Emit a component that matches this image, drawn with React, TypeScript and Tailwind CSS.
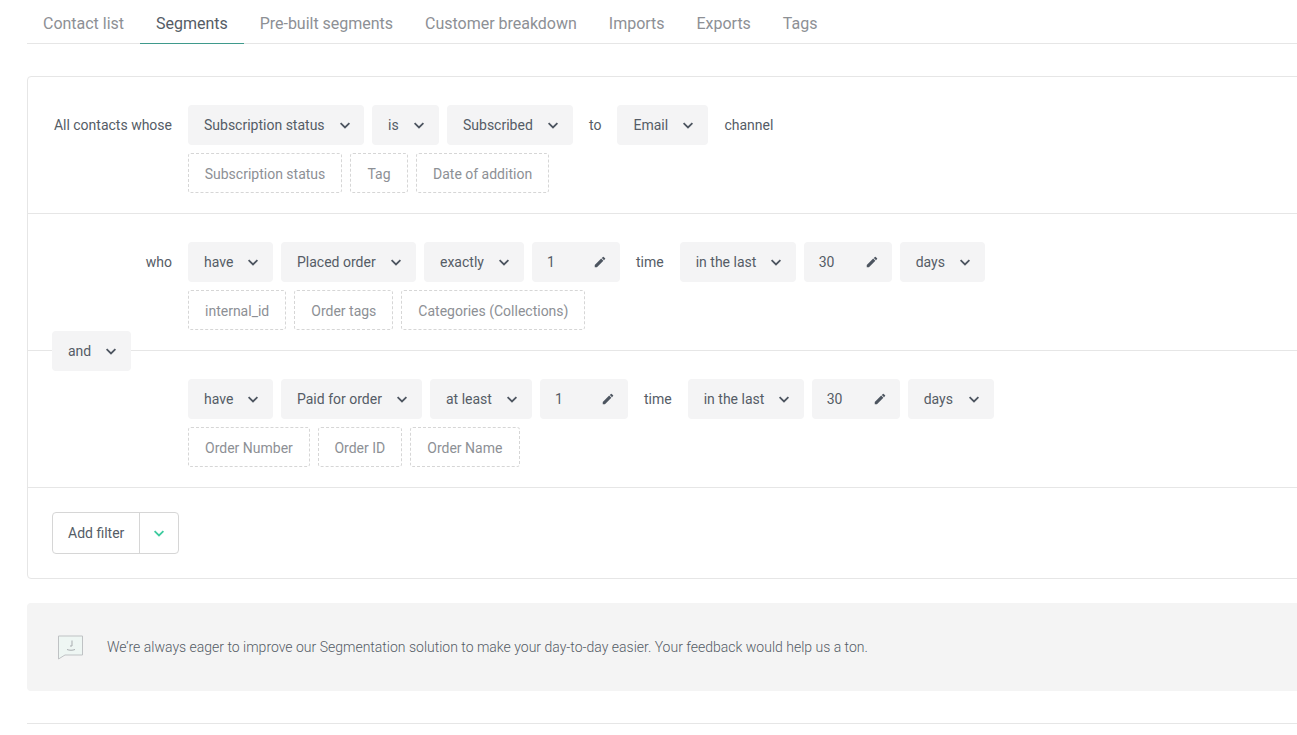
import { ReactNode } from "react";

function Chevron({ className = "text-[#4d5560]" }: { className?: string }) {
  return (
    <svg viewBox="0 0 16 16" className={`w-4 h-4 shrink-0 ${className}`} fill="none" stroke="currentColor" strokeWidth="1.8">
      <path d="M3.6 6.200 8 10.400l4.400-4.200" />
    </svg>
  );
}

function Pencil() {
  return (
    <svg viewBox="0 0 24 24" className="w-[14px] h-[14px] shrink-0 text-[#4d5560]" fill="currentColor">
      <path d="M3 17.25V21h3.75L17.81 9.94l-3.75-3.75L3 17.25zM20.71 7.04a1 1 0 0 0 0-1.41l-2.34-2.34a1 1 0 0 0-1.41 0l-1.83 1.83 3.75 3.75 1.83-1.83z" />
    </svg>
  );
}

function Select({ label, width = "" }: { label: string; width?: string }) {
  return (
    <div className={`h-10 flex items-center justify-between gap-3 pl-4 pr-3 bg-[#f4f4f5] rounded-[4px] text-[#555c66] whitespace-nowrap ${width}`}>
      {label}
      <Chevron />
    </div>
  );
}

function NumberInput({ value }: { value: string }) {
  return (
    <div className="h-10 w-[88px] flex items-center justify-between pl-[15px] pr-[13px] bg-[#f4f4f5] rounded-[4px] text-[#555c66]">
      {value}
      <Pencil />
    </div>
  );
}

function Word({ children }: { children: ReactNode }) {
  return <span className="px-2 text-[#555c66] whitespace-nowrap">{children}</span>;
}

function Ghost({ label, width = "" }: { label: string; width?: string }) {
  return (
    <div className={`h-10 flex items-center justify-center px-4 pt-[2px] border border-dashed border-[#d6d6d6] rounded-[3px] text-[#8d9095] whitespace-nowrap ${width}`}>
      {label}
    </div>
  );
}

function Section({ lead, main, ghosts }: { lead?: string; main: ReactNode; ghosts: ReactNode }) {
  return (
    <div className="flex pt-7 pb-5 border-b border-[#e6e6e6]">
      <div className="w-[144px] shrink-0 h-10 flex items-center justify-end text-[#555c66]">{lead}</div>
      <div className="ml-4">
        <div className="flex items-center gap-2">{main}</div>
        <div className="flex gap-2 mt-2">{ghosts}</div>
      </div>
    </div>
  );
}

export default function App() {
  const tabs = ["Contact list", "Segments", "Pre-built segments", "Customer breakdown", "Imports", "Exports", "Tags"];

  return (
    <div className="h-[735px] overflow-hidden pl-[27px] bg-white font-['Roboto',sans-serif] text-sm">
      <div className="flex h-11 border-b border-[#e6e6e6] text-base tracking-[-0.015px]">
        {tabs.map((t) => (
          <div
            key={t}
            className={`h-11 px-4 pt-[12px] leading-6 whitespace-nowrap ${
              t === "Segments" ? "text-[#555c66] border-b border-[#3f9a8c]" : "text-[#8d9095]"
            }`}
          >
            {t}
          </div>
        ))}
      </div>

      <div className="relative mt-8 mr-[-20px] border border-[#e6e6e6] rounded-[4px]">
        <Section
          lead="All contacts whose"
          main={
            <>
              <Select label="Subscription status" width="w-[176px]" />
              <Select label="is" width="w-[67px]" />
              <Select label="Subscribed" width="w-[126px]" />
              <Word>to</Word>
              <Select label="Email" width="w-[91px]" />
              <Word>channel</Word>
            </>
          }
          ghosts={
            <>
              <Ghost label="Subscription status" width="w-[154px]" />
              <Ghost label="Tag" width="w-[58px]" />
              <Ghost label="Date of addition" />
            </>
          }
        />
        <Section
          lead="who"
          main={
            <>
              <Select label="have" width="w-[85px]" />
              <Select label="Placed order" width="w-[135px]" />
              <Select label="exactly" width="w-[100px]" />
              <NumberInput value="1" />
              <Word>time</Word>
              <Select label="in the last" width="w-[116px]" />
              <NumberInput value="30" />
              <Select label="days" width="w-[85px]" />
            </>
          }
          ghosts={
            <>
              <Ghost label="internal_id" />
              <Ghost label="Order tags" />
              <Ghost label="Categories (Collections)" />
            </>
          }
        />
        <Section
          main={
            <>
              <Select label="have" width="w-[85px]" />
              <Select label="Paid for order" width="w-[141px]" />
              <Select label="at least" width="w-[102px]" />
              <NumberInput value="1" />
              <Word>time</Word>
              <Select label="in the last" width="w-[116px]" />
              <NumberInput value="30" />
              <Select label="days" width="w-[86px]" />
            </>
          }
          ghosts={
            <>
              <Ghost label="Order Number" />
              <Ghost label="Order ID" width="w-[84px]" />
              <Ghost label="Order Name" width="w-[110px]" />
            </>
          }
        />

        <div className="absolute left-6 top-[254px]">
          <Select label="and" width="w-[79px]" />
        </div>

        <div className="py-6 pl-6">
          <div className="inline-flex h-[42px] border border-[#d6d6d6] rounded-[4px] text-[#555c66]">
            <div className="flex items-center px-[15px] border-r border-[#d6d6d6]">Add filter</div>
            <div className="flex items-center justify-center w-[38px]">
              <Chevron className="text-[#3ecb9f]" />
            </div>
          </div>
        </div>
      </div>

      <div className="mt-6 mr-[-20px] h-[88px] flex items-center pl-[31px] bg-[#f4f4f4] rounded-[4px]">
        <svg viewBox="0 0 25 25" className="w-[25px] h-[25px] shrink-0" fill="none">
          <path d="M.5 1h24v19H7L.5 24z" fill="#eef6f3" stroke="#bfc2c4" strokeWidth="1" />
          <path d="M14 5.500v5.500h-2M9 14.500c2.500 1 5.500 1 8 0" stroke="#a9adb0" strokeWidth="1" />
        </svg>
        <p className="ml-6 text-[#555c66] font-light whitespace-nowrap">
          We’re always eager to improve our Segmentation solution to make your day-to-day easier. Your feedback would help us a ton.
        </p>
      </div>

      <div className="mt-8 border-t border-[#e6e6e6]" />
    </div>
  );
}
